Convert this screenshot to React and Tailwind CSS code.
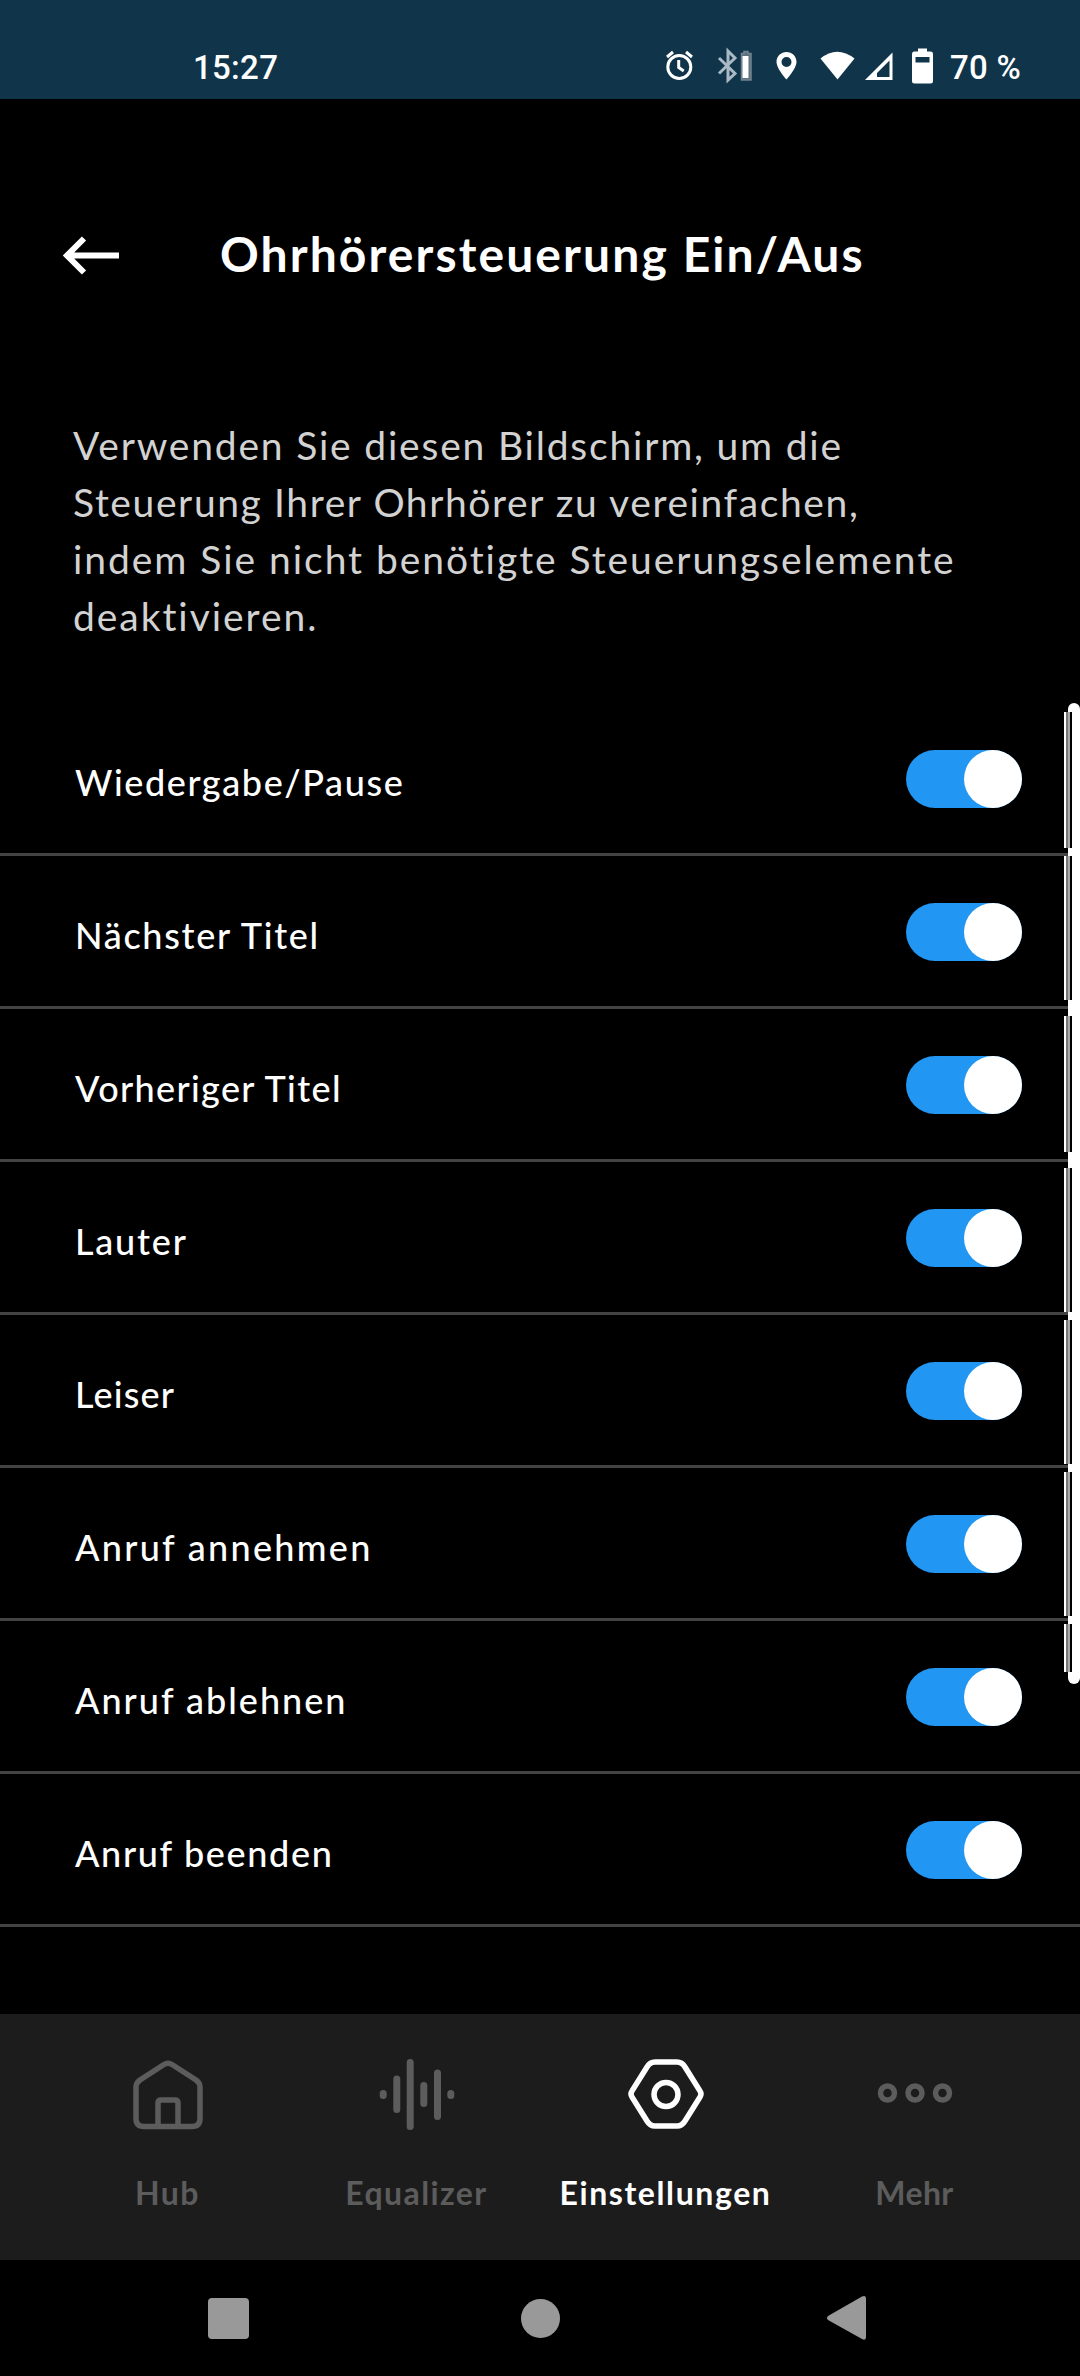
import { useState } from 'react'

const INTRO = [
  { text: 'Verwenden Sie diesen Bildschirm, um die', tracking: 'tracking-[1.8px]' },
  { text: 'Steuerung Ihrer Ohrhörer zu vereinfachen,', tracking: 'tracking-[1.6px]' },
  { text: 'indem Sie nicht benötigte Steuerungselemente', tracking: 'tracking-[1.95px]' },
  { text: 'deaktivieren.', tracking: 'tracking-[1.95px]' },
]

const CONTROLS = [
  { label: 'Wiedergabe/Pause', tracking: 'tracking-[1.6px]' },
  { label: 'Nächster Titel', tracking: 'tracking-[1.7px]' },
  { label: 'Vorheriger Titel', tracking: 'tracking-[1.35px]' },
  { label: 'Lauter', tracking: 'tracking-[1.8px]' },
  { label: 'Leiser', tracking: 'tracking-[1.2px]' },
  { label: 'Anruf annehmen', tracking: 'tracking-[2.3px]' },
  { label: 'Anruf ablehnen', tracking: 'tracking-[2px]' },
  { label: 'Anruf beenden', tracking: 'tracking-[1.65px]' },
]

// edge pieces of the scroll thumb, [top, height] relative to the thumb
const THUMB_PIECES = [
  [9, 136], [153, 144], [313, 136], [465, 144], [617, 144], [769, 144], [921, 48],
]

function StatusBar() {
  return (
    <div className="flex h-[99px] shrink-0 bg-[#10354b] font-[Roboto] text-[33px] font-medium leading-none tracking-[0.3px] text-white">
      <span className="mt-[51px] ml-[193px] w-[100px] whitespace-nowrap">15:27</span>
      <svg className="ml-[367px] h-[99px] w-[284px]" viewBox="660 0 284 99" fill="none">
        <g stroke="#fff" strokeWidth="3">
          <circle cx="679.3" cy="67" r="11.5" />
          <path d="M678.7 60v7.500l5 3.500M667 57l6-5M692 57l-6-5" />
        </g>
        <path d="M719 58l16 15.500-7 6.500V51l7 7-16 15.500" stroke="#a9bac4" strokeWidth="3" />
        <path d="M741.500 53.500h2.500v-2h4v2h3v26.500h-9.500z" fill="#5d7280" stroke="#75848c" strokeWidth="1.500" />
        <path d="M742.500 56h6v22h-6z" fill="#fff" />
        <path fillRule="evenodd" d="M786.500 52c-5.600 0-10 4.300-10 9.800 0 7 10 17.700 10 17.700s10-10.700 10-17.700c0-5.500-4.400-9.800-10-9.800zm0 5a5 5 0 110 10 5 5 0 010-10z" fill="#fff" />
        <path d="M820.500 58.500Q837 45 854.500 58.500L837.500 79.500z" fill="#fff" />
        <path fillRule="evenodd" d="M892.500 52.500v27.500H865zm-3 8l-12.500 12.500v4h12.500z" fill="#fff" />
        <path fillRule="evenodd" d="M914 51.500h4v-3h9v3h3.500q2.500 0 2.500 2.500v27q0 2.500-2.500 2.500h-16q-2.500 0-2.500-2.500V54q0-2.500 2-2.500zm1.500 5.500v5.500h14V57z" fill="#fff" />
      </svg>
      <span className="mt-[51px] ml-[6px] whitespace-nowrap">70 %</span>
    </div>
  )
}

function Header() {
  return (
    <header className="flex h-[312px] shrink-0 items-start">
      <svg className="mt-[135px] ml-[60px] h-[44px] w-[60px]" viewBox="0 0 60 44" fill="none" stroke="#fff" strokeWidth="6">
        <path d="M6 21.500h53M24 4.500L7 21.500 24 38.500" />
      </svg>
      <h1 className="mt-[125px] ml-[100px] whitespace-nowrap text-[48px] font-bold leading-[60px] tracking-[2.1px]">
        Ohrhörersteuerung Ein/Aus
      </h1>
    </header>
  )
}

function Toggle({ on, onClick }) {
  return (
    <button
      role="switch"
      aria-checked={on}
      onClick={onClick}
      className={`mt-[47px] flex h-[58px] w-[116px] rounded-full ${on ? 'justify-end bg-[#2196f3]' : 'justify-start bg-[#555]'}`}
    >
      <span className="size-[58px] rounded-full bg-white" />
    </button>
  )
}

function ControlRow({ label, tracking }) {
  const [on, setOn] = useState(true)
  return (
    <li className="flex h-[153px] items-start justify-between border-b-3 border-[#434343] pr-[58px] pl-[75px]">
      <span className={`mt-[54px] whitespace-nowrap text-[36px] font-medium leading-[50px] ${tracking}`}>{label}</span>
      <Toggle on={on} onClick={() => setOn(!on)} />
    </li>
  )
}

function ScrollThumb() {
  return (
    <div className="absolute top-[703px] right-0 h-[981px] w-[12px] rounded-full bg-white">
      {THUMB_PIECES.map(([top, height]) => (
        <div key={top} className="absolute -left-[4px] flex w-[8px]" style={{ top, height }}>
          <span className="w-[2px] bg-white" />
          <span className="w-[2px] bg-[#777]" />
          <span className="w-[2px] bg-[#aaa]" />
          <span className="w-[2px] bg-black" />
        </div>
      ))}
    </div>
  )
}

const TABS = [
  {
    label: 'Hub',
    tracking: 'tracking-[1.5px]',
    icon: (
      <path d="M36 5.500Q40 3 44 5.500L68 21Q72 24 72 28V59.500Q72 67.500 64 67.500H16Q8 67.500 8 59.500V28Q8 24 12 21ZM30 67.500V44Q30 41 33 41H47Q50 41 50 44V67.500" />
    ),
  },
  {
    label: 'Equalizer',
    tracking: 'tracking-[1.4px]',
    icon: (
      <path strokeLinecap="round" strokeWidth="7" d="M6.200 34.500v2M19.800 20v30.500M33.200 3.500v64M46.800 26.500v18M60.500 14v43.500M73.800 34.500v2" />
    ),
  },
  {
    label: 'Einstellungen',
    tracking: 'tracking-[1.6px]',
    icon: (
      <>
        <path d="M29 3H51Q56 3 59 8L74 32Q76 35 74 38L59 62Q56 67 51 67H29Q24 67 21 62L6 38Q4 35 6 32L21 8Q24 3 29 3Z" />
        <circle cx="40" cy="35.500" r="12" />
      </>
    ),
  },
  {
    label: 'Mehr',
    tracking: 'tracking-[0.4px]',
    icon: (
      <>
        <circle cx="12.500" cy="34" r="7" />
        <circle cx="40" cy="34" r="7" />
        <circle cx="67.500" cy="34" r="7" />
      </>
    ),
  },
]

function TabBar() {
  const [active, setActive] = useState('Einstellungen')
  return (
    <nav className="flex h-[246px] shrink-0 bg-[#1c1c1c] pr-[41px] pl-[43px]">
      {TABS.map(({ label, icon, tracking }) => (
        <button
          key={label}
          onClick={() => setActive(label)}
          className={`flex flex-1 flex-col items-center pt-[45px] ${active === label ? 'text-white' : 'text-[#5c5c5c]'}`}
        >
          <svg className="h-[74px] w-[80px]" viewBox="0 0 80 74" fill="none" stroke="currentColor" strokeWidth="5.500">
            {icon}
          </svg>
          <span className={`mt-[38px] whitespace-nowrap text-[32px] font-bold leading-[44px] ${tracking}`}>{label}</span>
        </button>
      ))}
    </nav>
  )
}

function NavigationBar() {
  return (
    <div className="flex h-[116px] shrink-0 items-center justify-between bg-black pr-[213px] pl-[208px]">
      <div className="size-[41px] rounded-[4px] bg-[#999]" />
      <div className="ml-[4px] size-[39px] rounded-full bg-[#999]" />
      <svg className="h-[46px] w-[40px]" viewBox="0 0 40 46" fill="#999">
        <path d="M1 21L35 1.500Q39 -0.500 39 4V42Q39 46 35 44L1 25Q-1 23 1 21Z" />
      </svg>
    </div>
  )
}

export default function App() {
  return (
    <div className="relative flex h-[2376px] w-[1080px] flex-col overflow-hidden bg-black font-[Lato,sans-serif] text-white">
      <StatusBar />
      <Header />
      <p className="h-[292px] shrink-0 pt-[6px] pl-[73px] text-[39px] leading-[57px] text-[#d2d2d2]">
        {INTRO.map(({ text, tracking }) => (
          <span key={text} className={`block whitespace-nowrap ${tracking}`}>{text}</span>
        ))}
      </p>
      <ul className="h-[1311px] shrink-0">
        {CONTROLS.map((control) => (
          <ControlRow key={control.label} {...control} />
        ))}
      </ul>
      <ScrollThumb />
      <TabBar />
      <NavigationBar />
    </div>
  )
}
